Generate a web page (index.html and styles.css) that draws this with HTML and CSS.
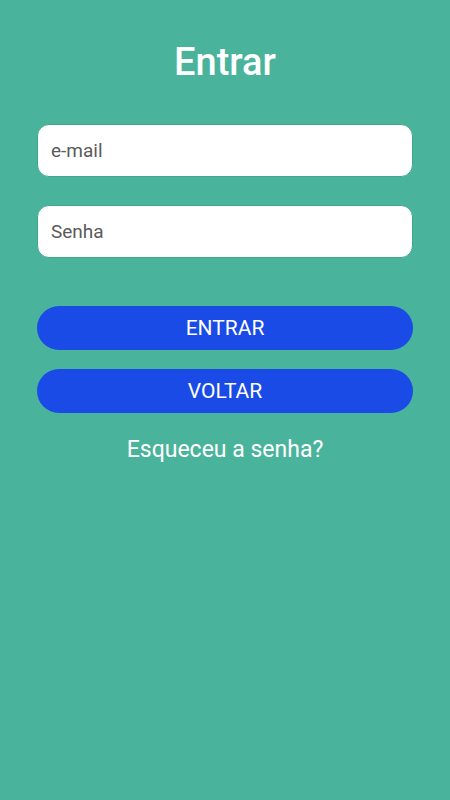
FILE: index.html
```html
<!DOCTYPE html>
<html lang="pt">
<head>
  <meta charset="UTF-8">
  <meta name="viewport" content="width=device-width, initial-scale=1.0">
  <title>Entrar</title>
  <link rel="stylesheet" href="styles.css">
</head>
<body>
  <div id="container">
    <h1>Entrar</h1>
    <form id="loginForm">
      <input type="email" class="field" placeholder="e-mail">
      <input type="password" class="field" placeholder="Senha">
      <button type="submit" class="btn btn-first">ENTRAR</button>
      <button type="button" class="btn">VOLTAR</button>
    </form>
    <a href="#" class="forgot">Esqueceu a senha?</a>
  </div>
</body>
</html>
```
FILE: styles.css
```css
body {
  background-color: #4ab39b;
  color: white;
  font-family: Roboto, "Liberation Sans", sans-serif;
  height: 100vh;
  margin: 0;
}

#container {
  display: flex;
  flex-direction: column;
  align-items: center;
  padding: 0 37px;
}

h1 {
  font-size: 38px;
  font-weight: 500;
  margin: 41px 0 0;
  line-height: 42px;
}

form {
  display: flex;
  flex-direction: column;
  width: 100%;
  margin-top: 41px;
}

.field {
  box-sizing: border-box;
  height: 53px;
  width: 100%;
  padding: 0 13px;
  margin-bottom: 28px;
  border: 1px solid #3ea88f;
  border-radius: 12px;
  background-color: white;
  font-family: inherit;
  font-size: 19px;
  color: #555;
  outline: none;
}

.field::placeholder {
  color: #5a5a5a;
}

.btn {
  height: 44px;
  width: 100%;
  border: none;
  border-radius: 22px;
  background-color: #1a4be6;
  color: white;
  font-family: inherit;
  font-size: 21px;
  cursor: pointer;
  margin-bottom: 19px;
  padding: 0;
}

.btn-first {
  margin-top: 20px;
}

.forgot {
  color: white;
  text-decoration: none;
  font-size: 23px;
  margin-top: 4px;
}
```
